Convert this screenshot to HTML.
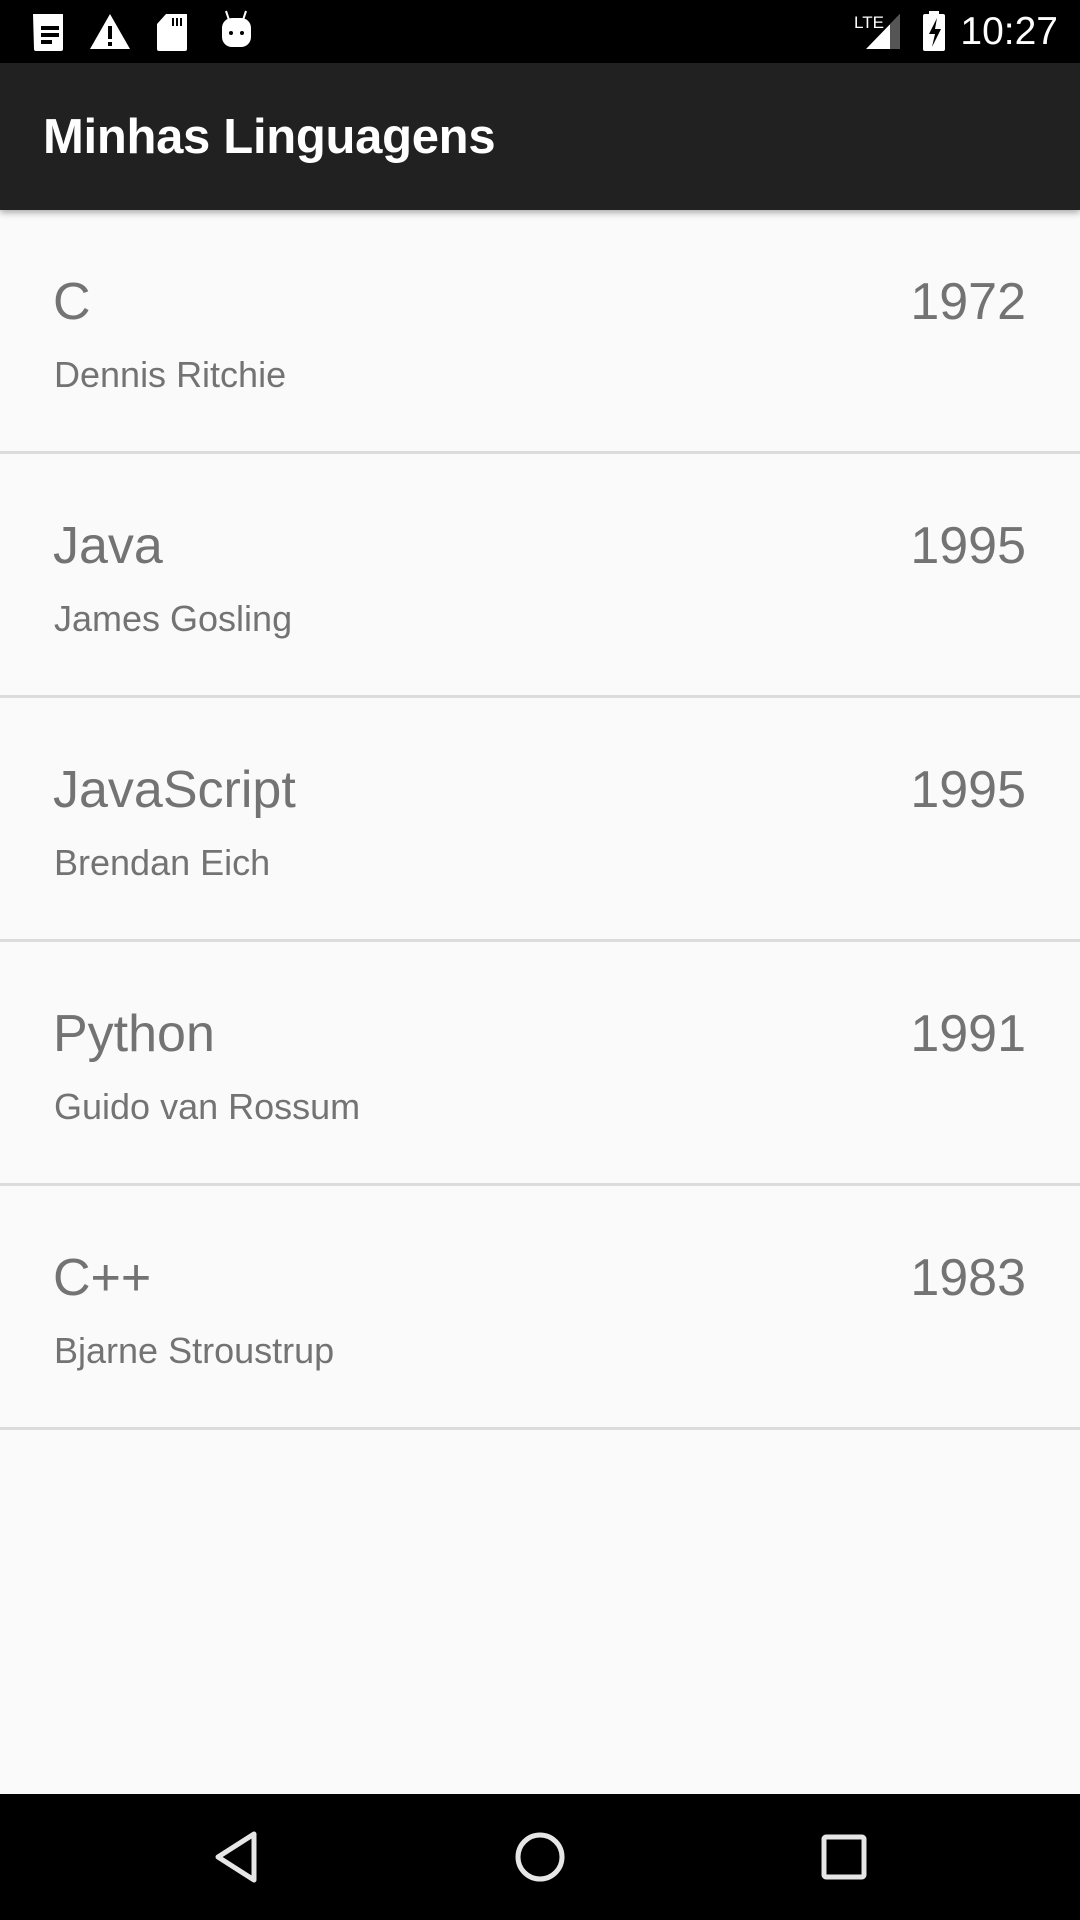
<!DOCTYPE html>
<html><head><meta charset="utf-8"><style>
*{margin:0;padding:0;box-sizing:border-box}
body{width:1080px;height:1920px;background:#fafafa;font-family:"Liberation Sans",sans-serif;position:relative;overflow:hidden}
.sb{position:absolute;top:0;left:0;width:1080px;height:63px;background:#000}
.tb{position:absolute;top:63px;left:0;width:1080px;height:147px;background:#212121;box-shadow:0 3px 6px rgba(0,0,0,.3);z-index:2}
.tb span{position:absolute;left:43px;top:46px;color:#fff;font-size:49px;font-weight:bold;letter-spacing:-0.3px}
.row{position:absolute;left:0;width:1080px;height:244px;border-bottom:3px solid #dcdcdc}
.t{position:absolute;left:53px;top:62px;font-size:52px;color:#737373}
.y{position:absolute;right:54px;top:62px;font-size:52px;color:#737373}
.s{position:absolute;left:54px;top:144px;font-size:36px;color:#737373}
.nav{position:absolute;top:1794px;left:0;width:1080px;height:126px;background:#000}
.time{position:absolute;right:22px;top:10px;color:#fff;font-size:39px}
</style></head><body>
<div class="sb">
<svg width="1080" height="63" style="position:absolute;left:0;top:0">
<path d="M33 14h30v35a2 2 0 0 1-2 2H36a2 2 0 0 1-2-2z" fill="#fff"/>
<rect x="41" y="26" width="18" height="4" fill="#000"/><rect x="41" y="33" width="18" height="4" fill="#000"/><rect x="41" y="40" width="11" height="4" fill="#000"/>
<path d="M110 14L130 49H90z" fill="#fff"/><rect x="108" y="26" width="4" height="13" fill="#000"/><rect x="108" y="42" width="4" height="4" fill="#000"/>
<path d="M166 14h21v35a2 2 0 0 1-2 2h-26a2 2 0 0 1-2-2V24z" fill="#fff"/><rect x="172" y="18" width="2" height="8" fill="#000"/><rect x="176" y="18" width="2" height="8" fill="#000"/><rect x="180" y="18" width="2" height="8" fill="#000"/>
<path d="M226 11l3 9M246 11l-3 9" stroke="#fff" stroke-width="2"/>
<rect x="222" y="18" width="29" height="29" rx="10" fill="#fff"/><circle cx="231" cy="33" r="2" fill="#000"/><circle cx="242" cy="33" r="2" fill="#000"/>
<text x="854" y="28" fill="#fff" font-size="17" font-family="Liberation Sans">LTE</text>
<path d="M866 49L900 14v35z" fill="#fff"/><path d="M890 24l10-10v35h-10z" fill="#555"/>
<rect x="923" y="14" width="22" height="37" rx="2" fill="#fff"/><rect x="929" y="11" width="10" height="4" fill="#fff"/>
<path d="M937 18l-8 16h6l-3 13 9-18h-6z" fill="#000"/>
</svg>
<div class="time">10:27</div>
</div>
<div class="tb"><span>Minhas Linguagens</span></div>
<div class="row" style="top:210px"><div class="t">C</div><div class="y">1972</div><div class="s">Dennis Ritchie</div></div>
<div class="row" style="top:454px"><div class="t">Java</div><div class="y">1995</div><div class="s">James Gosling</div></div>
<div class="row" style="top:698px"><div class="t">JavaScript</div><div class="y">1995</div><div class="s">Brendan Eich</div></div>
<div class="row" style="top:942px"><div class="t">Python</div><div class="y">1991</div><div class="s">Guido van Rossum</div></div>
<div class="row" style="top:1186px"><div class="t">C++</div><div class="y">1983</div><div class="s">Bjarne Stroustrup</div></div>
<div class="nav">
<svg width="1080" height="126" style="position:absolute;left:0;top:0">
<path d="M254 40L218 63l36 23z" fill="none" stroke="#e6e6e6" stroke-width="5" stroke-linejoin="round"/>
<circle cx="540" cy="63" r="22" fill="none" stroke="#e6e6e6" stroke-width="5"/>
<rect x="824" y="43" width="40" height="40" rx="2" fill="none" stroke="#e6e6e6" stroke-width="5"/>
</svg>
</div>
</body></html>
